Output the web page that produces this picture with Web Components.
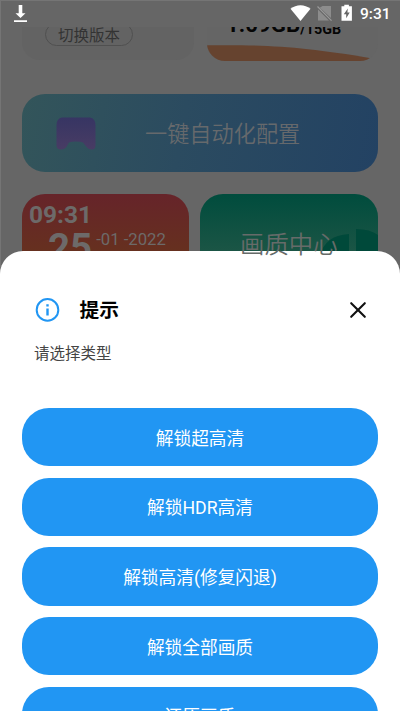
<!DOCTYPE html>
<html lang="zh-CN"><head><meta charset="utf-8"><title>画质</title>
<style>
html,body{margin:0;height:100%;overflow:hidden}
body{font-family:Roboto,"Noto Sans CJK SC",sans-serif;background:#666}
</style></head><body>
<phone-screen>
  <status-bar slot="status">9:31</status-bar>
  <version-card slot="top">切换版本</version-card>
  <memory-card slot="top"><span slot="used">1.09GB</span><span slot="total">/15GB</span></memory-card>
  <config-banner slot="banner">一键自动化配置</config-banner>
  <clock-card slot="tiles"><span slot="time">09:31</span><span slot="day">25</span><span slot="date">-01 -2022</span></clock-card>
  <quality-card slot="tiles">画质中心</quality-card>
  <bottom-sheet slot="sheet">
    <span slot="title">提示</span><span slot="message">请选择类型</span>
    <option-button>解锁超高清</option-button>
    <option-button>解锁HDR高清</option-button>
    <option-button>解锁高清(修复闪退)</option-button>
    <option-button>解锁全部画质</option-button>
    <option-button>还原画质</option-button>
  </bottom-sheet>
</phone-screen>
<script>
function define(name, html){
  customElements.define(name, class extends HTMLElement{
    constructor(){ super(); this.attachShadow({mode:'open'}).innerHTML = html; }
  });
}
define('phone-screen', `<style>
:host{display:block;position:relative;width:400px;height:711px;overflow:hidden;background:#666;box-shadow:inset 1px 1px #757575}
.top{display:flex;gap:13px;height:34px;padding:0 22px;overflow:hidden}
.banner{margin:33px 22px 22px;height:78px}
.tiles{display:flex;gap:11px;padding:0 22px;height:120px}
.sheet{position:absolute;left:0;right:0;top:251px;bottom:0}
</style><slot name="status"></slot><div class="top"><slot name="top"></slot></div>
<div class="banner"><slot name="banner"></slot></div><div class="tiles"><slot name="tiles"></slot></div>
<div class="sheet"><slot name="sheet"></slot></div>`);
define('status-bar', `<style>
:host{display:flex;height:27px;box-sizing:border-box;color:#fff;font:500 15.5px/27px Roboto,sans-serif}
svg{display:block;width:358px;height:27px;flex:none}
span{padding-left:2px;padding-top:1px}
</style><svg viewBox="0 0 358 27">
<path fill="#fff" d="M18.700 5h3.600v8.300h3.200L20.500 18l-5-4.700h3.200zM14 20.200h13v1.800H14z"/>
<path fill="#fff" d="M290.500 8.800Q295 5.200 300.500 5.200T310.500 8.800L300.500 21z"/>
<path fill="#8c8c8c" d="M322.500 6h8.500v12L319.800 7.800zM318 9.500L329 20.400H318z"/>
<path stroke="#999" stroke-width="1.2" d="M317.500 6.500L331.500 20.700"/>
<path fill="#fff" d="M341.500 6.300h2.800V4.800h4.600v1.500h3v14.500h-10.400z"/>
<path fill="#666" d="M347.800 8.500l-4 5.700h2.400v4l3.500-5.700h-2.300z"/>
</svg><span><slot></slot></span>`);
define('version-card', `<style>
:host{display:block;width:172px;height:33px;overflow:hidden;background:#636363;border-radius:0 0 18px 18px}
div{box-sizing:border-box;width:88px;height:23px;margin:-4px 0 0 23px;border:1px solid #505050;border-radius:12px;color:#333;font-size:15.500px;line-height:24px;text-align:center;white-space:nowrap}
</style><div><slot></slot></div>`);
define('memory-card', `<style>
:host{display:grid;width:171px;height:34px;overflow:hidden;background:#656565;border-radius:0 0 18px 18px}
svg,div{grid-area:1/1}
svg{display:block;width:171px;height:34px}
div{display:flex;color:#050505;font-weight:700;height:10px;padding-left:19px;white-space:nowrap}
.u{font-size:22.300px;line-height:26px;margin-top:-16px}
.t{font-size:14.400px;line-height:18px;margin-top:-6px}
</style><svg viewBox="0 0 171 34"><path fill="#66432f" d="M0 18.300C60 17.500 97 20 164 31.200L160 34H0z"/></svg>
<div><span class="u"><slot name="used"></slot></span><span class="t"><slot name="total"></slot></span></div>`);
define('config-banner', `<style>
:host{display:flex;align-items:center;height:78px;border-radius:23px;background:linear-gradient(100deg,#33555a,#2b4b60 45%,#234263);color:#66696c;font-size:22.200px;font-weight:350}
svg{width:40px;height:33px;margin-left:34px;margin-right:49px}
span{margin-top:-2px}
</style><svg viewBox="0 0 40 33"><defs><linearGradient id="g" x2="0" y2="1"><stop stop-color="#373563"/><stop offset="1" stop-color="#483c64"/></linearGradient></defs>
<path fill="url(#g)" d="M6 .5H34Q39.500 1.500 39.500 8V28Q39.500 32.500 36 32.500Q32.500 32.500 31 30.500L27 25.500Q25 24.500 20 24.500T13 25.500L10 30.500Q8 32.500 5 32.500Q.5 32.500 .5 28V8Q.5 1.500 6 .5Z"/></svg><span><slot></slot></span>`);
define('clock-card', `<style>
:host{display:block;width:167px;height:120px;overflow:hidden;border-radius:23px;background:linear-gradient(#66242a,#66301f 57px);color:#6d6a69}
.time{font-size:24.500px;font-weight:700;line-height:28px;padding:7px 0 0 7px}
.row{display:flex;padding-left:26px;white-space:nowrap}
.day{font-size:38.500px;font-weight:700;line-height:46px;margin-top:-4px}
.date{font-size:16.700px;line-height:20px;padding-left:4px;margin-top:.6px}
</style><div class="time"><slot name="time"></slot></div><div class="row"><span class="day"><slot name="day"></slot></span><span class="date"><slot name="date"></slot></span></div>`);
define('quality-card', `<style>
:host{display:grid;width:178px;height:120px;overflow:hidden;border-radius:23px;background:linear-gradient(#004c3d,#1b5545 57px)}
svg,div{grid-area:1/1}
svg{width:178px;height:120px}
div{z-index:1;color:#666b69;font-size:24.400px;font-weight:350;line-height:30px;padding:36px 0 0 40px}
</style><svg viewBox="0 0 178 120"><path fill="#00493a" d="M149 40Q119 42 119 72V120H149zM156 35Q170 35 178 41V120H156z"/></svg><div><slot></slot></div>`);
define('bottom-sheet', `<style>
:host{display:flex;flex-direction:column;height:460px;box-sizing:border-box;overflow:hidden;background:#fff;border-radius:23px 23px 0 0;padding:46px 22px 0}
header{display:flex;align-items:center;height:25px;padding:0 9px 0 13px}
h2{font-size:19.700px;line-height:25px;font-weight:700;margin:0 auto 0 19.500px;padding-top:1px;color:#000}
svg{display:block;flex:none;width:25px;height:25px}
svg.x{width:22px}
p{margin:21px 0 0 12px;font-size:15.500px;line-height:22px;color:#444}
.list{display:flex;flex-direction:column;gap:11.300px;padding-top:43.200px}
</style><header><svg viewBox="0 0 25 25"><circle cx="12.500" cy="12.900" r="10.800" fill="none" stroke="#2196f3" stroke-width="2"/><path fill="#2196f3" d="M11.300 7.200h2.400v2.200h-2.400zM11.300 11.600h2.400v7h-2.400z"/></svg>
<h2><slot name="title"></slot></h2>
<svg class="x" viewBox="0 0 22 25"><path stroke="#111" stroke-width="2.100" stroke-linecap="round" d="M4.200 6.200L17.800 19.800M17.800 6.200L4.200 19.800"/></svg></header>
<p><slot name="message"></slot></p><div class="list"><slot></slot></div>`);
define('option-button', `<style>
:host{display:flex;flex:none;align-items:center;justify-content:center;height:58.300px;border-radius:27px;background:#2196f3;color:#fff;font-size:17.700px;white-space:nowrap}
span{margin-top:-1px}
</style><span><slot></slot></span>`);
</script></body></html>
